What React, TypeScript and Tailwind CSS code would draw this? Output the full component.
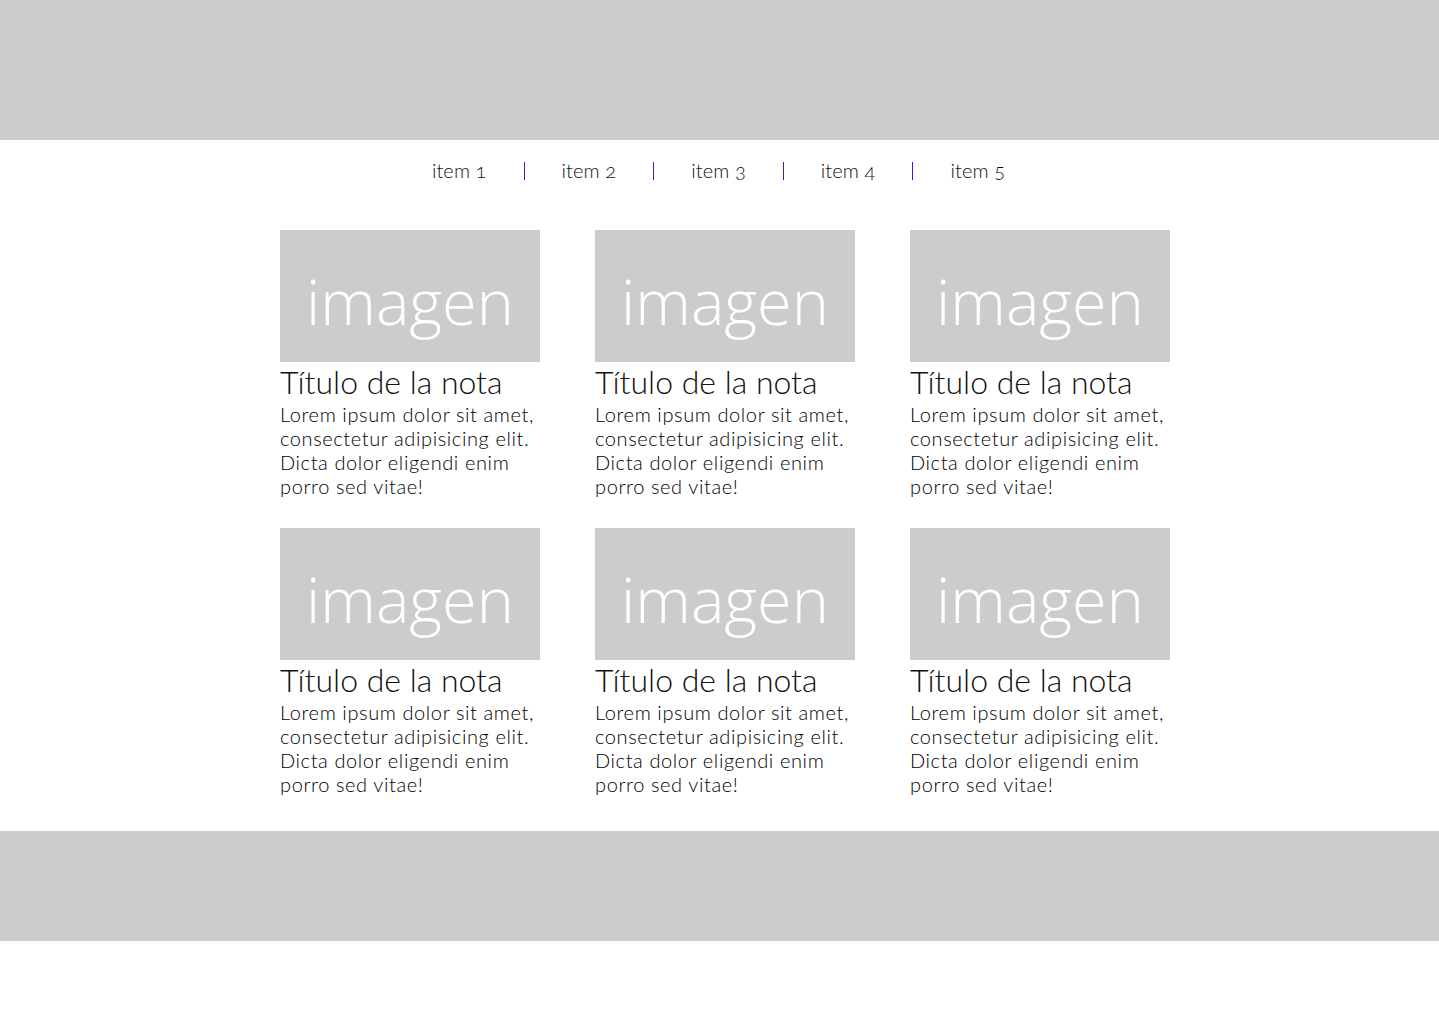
export default function App() {
  const cards = Array.from({ length: 6 });
  const items = ["item 1", "item 2", "item 3", "item 4", "item 5"];
  return (
    <div className="min-h-[1011px] bg-white font-['Lato',sans-serif] text-[#333]">
      <header className="h-[140px] bg-[#cccccc]" />
      <nav className="flex h-[60px] items-center justify-center pr-[2px] text-[20px] font-light text-[#111] [font-feature-settings:'onum']">
        {items.map((it, i) => (
          <div key={it} className="flex items-center whitespace-nowrap">
            {i > 0 && <span className="mx-[37px] mt-[1px] block h-[18px] w-px bg-[#2424d8]" />}
            <span className="tracking-[0.1px]">{it}</span>
          </div>
        ))}
      </nav>
      <main className="grid grid-cols-[repeat(3,260px)] gap-x-[55px] gap-y-[30px] pl-[280px] pt-[30px] pb-[35px]">
        {cards.map((_, i) => (
          <article key={i} className="w-[260px]">
            <div className="flex h-[132px] items-center justify-center bg-[#cccccc]">
              <span className="mt-[8px] font-['Open_Sans',sans-serif] text-[63px] font-light leading-none text-white">
                imagen
              </span>
            </div>
            <h2 className="text-[32px] font-light leading-[40px] text-[#111]">Título de la nota</h2>
            <p className="text-[20px] font-light leading-[24px] tracking-[0.6px] text-black">
              Lorem ipsum dolor sit amet, consectetur adipisicing elit. Dicta dolor eligendi enim porro sed vitae!
            </p>
          </article>
        ))}
      </main>
      <footer className="h-[110px] bg-[#cccccc]" />
    </div>
  );
}
